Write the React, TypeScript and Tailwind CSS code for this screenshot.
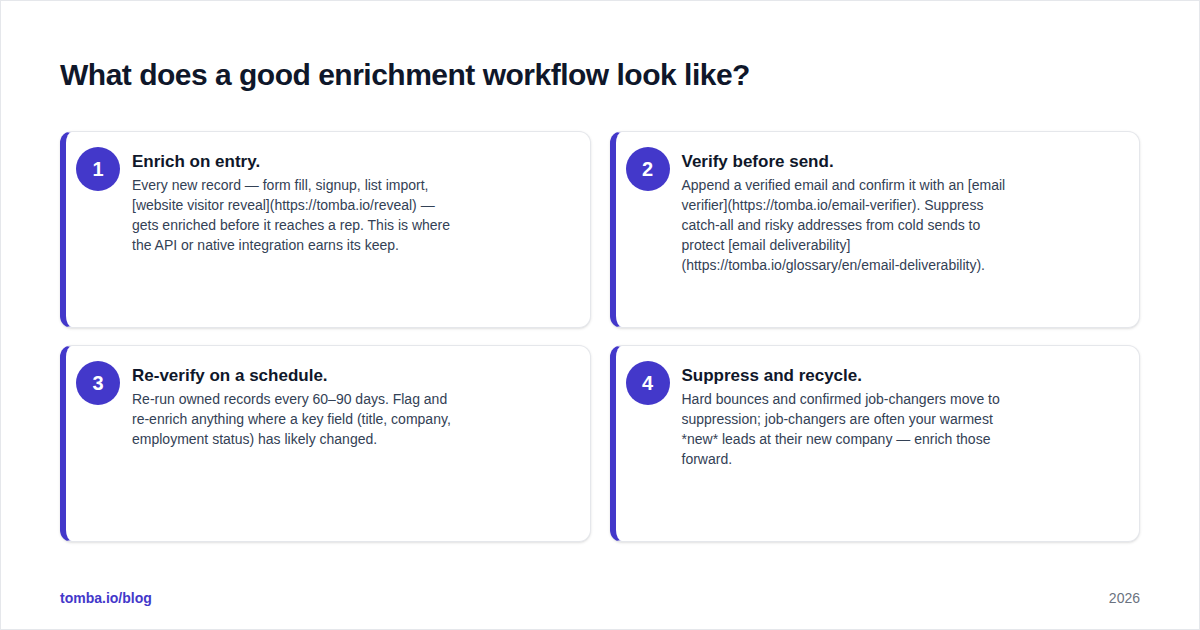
const steps = [
  {
    n: 1,
    title: 'Enrich on entry.',
    body: 'Every new record — form fill, signup, list import, [website visitor reveal](https://tomba.io/reveal) — gets enriched before it reaches a rep. This is where the API or native integration earns its keep.',
  },
  {
    n: 2,
    title: 'Verify before send.',
    body: 'Append a verified email and confirm it with an [email verifier](https://tomba.io/email-verifier). Suppress catch-all and risky addresses from cold sends to protect [email deliverability](https://tomba.io/glossary/en/email-deliverability).',
  },
  {
    n: 3,
    title: 'Re-verify on a schedule.',
    body: 'Re-run owned records every 60–90 days. Flag and re-enrich anything where a key field (title, company, employment status) has likely changed.',
  },
  {
    n: 4,
    title: 'Suppress and recycle.',
    body: 'Hard bounces and confirmed job-changers move to suppression; job-changers are often your warmest *new* leads at their new company — enrich those forward.',
  },
];

export default function App() {
  return (
    <div
      className="w-[1200px] h-[630px] bg-white border border-[#e5e7eb] flex flex-col px-[59px] pt-[54px] pb-[20px]"
      style={{ fontFamily: '"Liberation Sans", Arial, sans-serif' }}
    >
      <h1 className="text-[30px] font-bold text-[#0f172a] tracking-[-0.5px] leading-[40px]">
        What does a good enrichment workflow look like?
      </h1>
      <div className="grid grid-cols-2 gap-x-[19px] gap-y-[17px] mt-[36px]">
        {steps.map((s) => (
          <div
            key={s.n}
            className="h-[197px] bg-white rounded-xl border border-[#e5e7eb] border-l-[6px] border-l-[#4338ca] shadow-sm flex gap-3 pl-[10px] pt-[15px] pr-4"
          >
            <div className="w-11 h-11 shrink-0 rounded-full bg-[#4338ca] text-white text-[20px] font-bold flex items-center justify-center">
              {s.n}
            </div>
            <div className="pt-[4px]">
              <div className="text-[17px] font-bold text-[#0f172a] leading-[22px]">{s.title}</div>
              <p className="mt-[2px] max-w-[330px] text-[14px] leading-[20px] text-[#334155]">{s.body}</p>
            </div>
          </div>
        ))}
      </div>
      <div className="mt-auto flex justify-between items-center text-[14px]">
        <span className="font-bold text-[#4338ca]">tomba.io/blog</span>
        <span className="text-[#6b7280]">2026</span>
      </div>
    </div>
  );
}
